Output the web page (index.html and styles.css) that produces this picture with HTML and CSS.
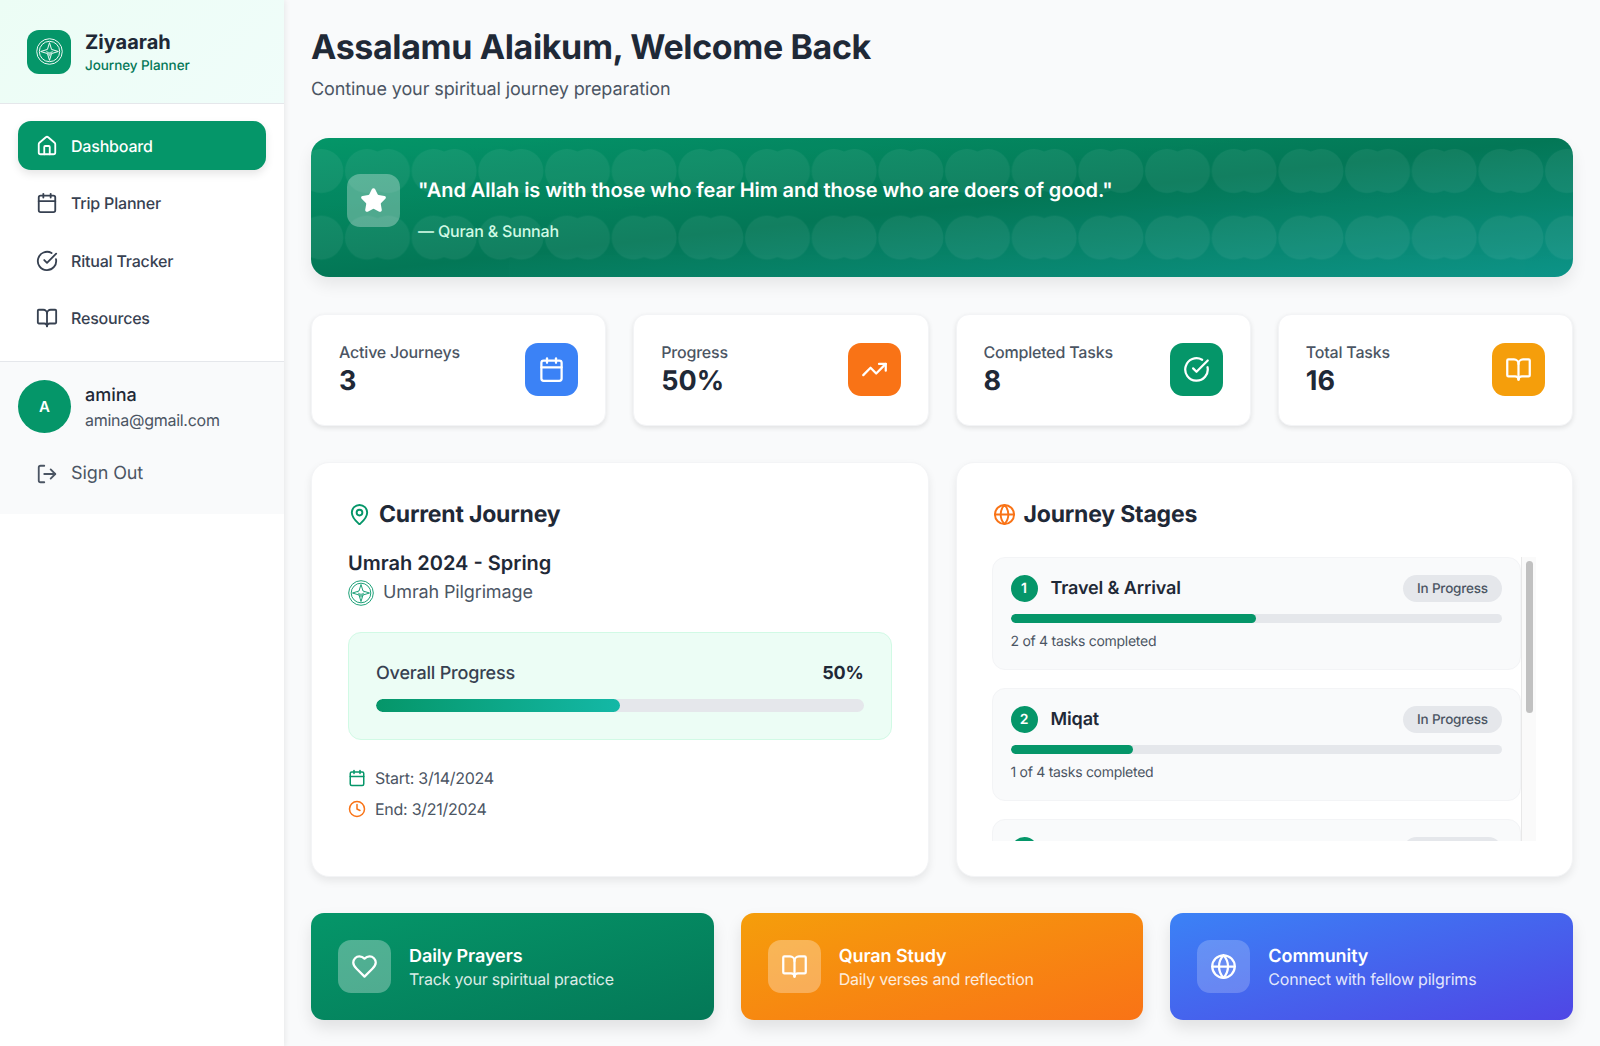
FILE: index.html
```html
<!DOCTYPE html>
<html lang="en">
<head>
  <meta charset="UTF-8">
  <title>Ziyaarah - Journey Planner</title>
  <link rel="stylesheet" href="styles.css">
</head>
<body>
  <svg class="defs" width="0" height="0">
    <defs>
      <symbol id="i-logo" viewBox="0 0 26 26">
        <circle cx="13" cy="13" r="12.3" fill="none" stroke="currentColor" stroke-width="0.9"/>
        <circle cx="13" cy="13" r="9.8" fill="none" stroke="currentColor" stroke-width="0.9"/>
        <path d="M13 4.5 15 11 21.5 13 15 15 13 21.5 11 15 4.5 13 11 11Z" fill="none" stroke="currentColor" stroke-width="0.9" stroke-linejoin="round"/>
        <path d="M9.2 12.2 13 13.8 16.8 12.2 14 16.4 13 18 12 16.4Z" fill="currentColor" opacity="0.6"/>
      </symbol>
      <symbol id="i-home" viewBox="0 0 24 24"><path d="M15 21v-8a1 1 0 0 0-1-1h-4a1 1 0 0 0-1 1v8"/><path d="M3 10a2 2 0 0 1 .709-1.528l7-5.999a2 2 0 0 1 2.582 0l7 5.999A2 2 0 0 1 21 10v9a2 2 0 0 1-2 2H5a2 2 0 0 1-2-2z"/></symbol>
      <symbol id="i-calendar" viewBox="0 0 24 24"><path d="M8 2v4"/><path d="M16 2v4"/><rect width="18" height="18" x="3" y="4" rx="2"/><path d="M3 10h18"/></symbol>
      <symbol id="i-check" viewBox="0 0 24 24"><path d="M21.801 10A10 10 0 1 1 17 3.335"/><path d="m9 11 3 3L22 4"/></symbol>
      <symbol id="i-book" viewBox="0 0 24 24"><path d="M12 7v14"/><path d="M3 18a1 1 0 0 1-1-1V4a1 1 0 0 1 1-1h5a4 4 0 0 1 4 4 4 4 0 0 1 4-4h5a1 1 0 0 1 1 1v13a1 1 0 0 1-1 1h-6a3 3 0 0 0-3 3 3 3 0 0 0-3-3z"/></symbol>
      <symbol id="i-logout" viewBox="0 0 24 24"><path d="m16 17 5-5-5-5"/><path d="M21 12H9"/><path d="M9 21H5a2 2 0 0 1-2-2V5a2 2 0 0 1 2-2h4"/></symbol>
      <symbol id="i-trend" viewBox="0 0 24 24"><path d="M16 7h6v6"/><path d="m22 7-8.5 8.5-5-5L2 17"/></symbol>
      <symbol id="i-pin" viewBox="0 0 24 24"><path d="M20 10c0 4.993-5.539 10.193-7.399 11.799a1 1 0 0 1-1.202 0C9.539 20.193 4 14.993 4 10a8 8 0 0 1 16 0"/><circle cx="12" cy="10" r="3"/></symbol>
      <symbol id="i-globe" viewBox="0 0 24 24"><circle cx="12" cy="12" r="10"/><path d="M12 2a14.5 14.5 0 0 0 0 20 14.5 14.5 0 0 0 0-20"/><path d="M2 12h20"/></symbol>
      <symbol id="i-clock" viewBox="0 0 24 24"><circle cx="12" cy="12" r="10"/><path d="M12 6v6l4 2"/></symbol>
      <symbol id="i-heart" viewBox="0 0 24 24"><path d="M19 14c1.49-1.46 3-3.21 3-5.5A5.5 5.5 0 0 0 16.5 3c-1.76 0-3 .5-4.5 2-1.5-1.5-2.74-2-4.5-2A5.5 5.5 0 0 0 2 8.5c0 2.3 1.5 4.05 3 5.5l7 7Z"/></symbol>
      <symbol id="i-star" viewBox="0 0 24 24"><path d="M11.525 2.295a.53.53 0 0 1 .95 0l2.31 4.679a2.123 2.123 0 0 0 1.595 1.16l5.166.756a.53.53 0 0 1 .294.904l-3.736 3.638a2.123 2.123 0 0 0-.611 1.878l.882 5.14a.53.53 0 0 1-.771.56l-4.618-2.428a2.122 2.122 0 0 0-1.973 0L6.396 21.01a.53.53 0 0 1-.77-.56l.881-5.139a2.122 2.122 0 0 0-.611-1.879L2.16 9.795a.53.53 0 0 1 .294-.906l5.165-.755a2.122 2.122 0 0 0 1.597-1.16z"/></symbol>
      <pattern id="bannerDots" x="0" y="0" width="66.67" height="66.67" patternUnits="userSpaceOnUse">
        <circle cx="-10.7" cy="33" r="22" fill="#fff"/>
        <circle cx="10.3" cy="33" r="22" fill="#fff"/>
        <circle cx="56" cy="33" r="22" fill="#fff"/>
        <circle cx="77" cy="33" r="22" fill="#fff"/>
      </pattern>
    </defs>
  </svg>

  <div class="app">
    <aside class="sidebar">
      <div class="brand">
        <div class="brand-logo"><svg class="logo-svg"><use href="#i-logo"/></svg></div>
        <div>
          <div class="brand-name">Ziyaarah</div>
          <div class="brand-sub">Journey Planner</div>
        </div>
      </div>

      <nav class="nav">
        <a class="nav-item active"><svg class="icon icon-nav"><use href="#i-home"/></svg>Dashboard</a>
        <a class="nav-item"><svg class="icon icon-nav"><use href="#i-calendar"/></svg>Trip Planner</a>
        <a class="nav-item"><svg class="icon icon-nav"><use href="#i-check"/></svg>Ritual Tracker</a>
        <a class="nav-item"><svg class="icon icon-nav"><use href="#i-book"/></svg>Resources</a>
      </nav>

      <div class="user-box">
        <div class="user">
          <div class="avatar">A</div>
          <div class="user-info">
            <div class="user-name">amina</div>
            <div class="user-mail">amina@gmail.com</div>
          </div>
        </div>
        <a class="sign-out"><svg class="icon icon-nav"><use href="#i-logout"/></svg>Sign Out</a>
      </div>
    </aside>

    <main class="main">
      <h1>Assalamu Alaikum, Welcome Back</h1>
      <p class="lead">Continue your spiritual journey preparation</p>

      <section class="banner">
        <svg class="banner-dots"><rect width="100%" height="100%" fill="url(#bannerDots)"/></svg>
        <div class="banner-star"><svg class="icon icon-lg icon-fill"><use href="#i-star"/></svg></div>
        <div class="banner-text">
          <div class="quote">"And Allah is with those who fear Him and those who are doers of good."</div>
          <div class="quote-src">— Quran &amp; Sunnah</div>
        </div>
      </section>

      <section class="stats">
        <div class="stat">
          <div class="stat-text"><div class="stat-label">Active Journeys</div><div class="stat-value">3</div></div>
          <div class="stat-icon blue"><svg class="icon icon-lg"><use href="#i-calendar"/></svg></div>
        </div>
        <div class="stat">
          <div class="stat-text"><div class="stat-label">Progress</div><div class="stat-value">50%</div></div>
          <div class="stat-icon orange"><svg class="icon icon-lg"><use href="#i-trend"/></svg></div>
        </div>
        <div class="stat">
          <div class="stat-text"><div class="stat-label">Completed Tasks</div><div class="stat-value">8</div></div>
          <div class="stat-icon green"><svg class="icon icon-lg"><use href="#i-check"/></svg></div>
        </div>
        <div class="stat">
          <div class="stat-text"><div class="stat-label">Total Tasks</div><div class="stat-value">16</div></div>
          <div class="stat-icon amber"><svg class="icon icon-lg"><use href="#i-book"/></svg></div>
        </div>
      </section>

      <section class="panels">
        <div class="panel">
          <h2 class="panel-title"><svg class="icon icon-title c-green"><use href="#i-pin"/></svg>Current Journey</h2>
          <div class="trip-name">Umrah 2024 - Spring</div>
          <div class="trip-type"><svg class="logo-small"><use href="#i-logo"/></svg>Umrah Pilgrimage</div>

          <div class="overall">
            <div class="overall-head"><span>Overall Progress</span><strong>50%</strong></div>
            <div class="overall-bar"><div class="overall-fill" style="width: 50%"></div></div>
          </div>

          <div class="date-row"><svg class="icon icon-date c-green"><use href="#i-calendar"/></svg>Start: 3/14/2024</div>
          <div class="date-row"><svg class="icon icon-date c-orange"><use href="#i-clock"/></svg>End: 3/21/2024</div>
        </div>

        <div class="panel">
          <h2 class="panel-title stages-title"><svg class="icon icon-title c-orange"><use href="#i-globe"/></svg>Journey Stages</h2>
          <div class="stages-wrap">
            <div class="stages">
              <div class="stage">
                <div class="stage-head">
                  <span class="stage-num">1</span><span class="stage-name">Travel &amp; Arrival</span><span class="pill">In Progress</span>
                </div>
                <div class="stage-bar"><div class="stage-fill" style="width: 50%"></div></div>
                <div class="stage-note">2 of 4 tasks completed</div>
              </div>
              <div class="stage">
                <div class="stage-head">
                  <span class="stage-num">2</span><span class="stage-name">Miqat</span><span class="pill">In Progress</span>
                </div>
                <div class="stage-bar"><div class="stage-fill" style="width: 25%"></div></div>
                <div class="stage-note">1 of 4 tasks completed</div>
              </div>
              <div class="stage">
                <div class="stage-head">
                  <span class="stage-num"></span><span class="stage-name"></span><span class="pill"></span>
                </div>
              </div>
            </div>
            <div class="scroll-track"><div class="scroll-thumb"></div></div>
          </div>
        </div>
      </section>

      <section class="actions">
        <div class="action a-green">
          <div class="action-icon"><svg class="icon icon-lg"><use href="#i-heart"/></svg></div>
          <div class="action-text"><div class="action-title">Daily Prayers</div><div class="action-sub">Track your spiritual practice</div></div>
        </div>
        <div class="action a-orange">
          <div class="action-icon"><svg class="icon icon-lg"><use href="#i-book"/></svg></div>
          <div class="action-text"><div class="action-title">Quran Study</div><div class="action-sub">Daily verses and reflection</div></div>
        </div>
        <div class="action a-blue">
          <div class="action-icon"><svg class="icon icon-lg"><use href="#i-globe"/></svg></div>
          <div class="action-text"><div class="action-title">Community</div><div class="action-sub">Connect with fellow pilgrims</div></div>
        </div>
      </section>
    </main>
  </div>
</body>
</html>
```

FILE: styles.css
```css
html, body {
  margin: 0;
  padding: 0;
  background-color: #f9fafb;
  font-family: Inter, "Liberation Sans", sans-serif;
  color: #1f2937;
  text-rendering: geometricPrecision;
}

.defs {
  position: absolute;
}

.app {
  display: flex;
  min-height: 100vh;
}

/* icons */
.icon {
  fill: none;
  stroke: currentColor;
  stroke-width: 2;
  stroke-linecap: round;
  stroke-linejoin: round;
  flex-shrink: 0;
}

.icon-fill {
  fill: currentColor;
}

.icon-nav {
  width: 22px;
  height: 22px;
}

.icon-lg {
  width: 27px;
  height: 27px;
}

.icon-title {
  width: 23px;
  height: 23px;
}

.icon-date {
  width: 18px;
  height: 18px;
}

.c-green {
  color: #059669;
}

.c-orange {
  color: #f97316;
}

/* sidebar */
.sidebar {
  width: 284px;
  flex-shrink: 0;
  background-color: #fff;
  box-shadow: 1px 0 6px rgba(0, 0, 0, 0.08);
}

.brand {
  height: 104px;
  box-sizing: border-box;
  padding: 0 27px;
  display: flex;
  align-items: center;
  gap: 14px;
  background: linear-gradient(135deg, #ecfdf5, #f0fdfa);
  border-bottom: 1px solid #e5e7eb;
}

.brand-logo {
  width: 44px;
  height: 44px;
  border-radius: 12px;
  background-color: #059669;
  color: #fff;
  display: flex;
  align-items: center;
  justify-content: center;
}

.logo-svg {
  width: 27px;
  height: 27px;
}

.brand-name {
  padding-top: 2px;
  font-size: 20px;
  font-weight: 650;
  line-height: 27px;
  color: #1f2937;
}

.brand-sub {
  margin-top: 1px;
  font-size: 13.5px;
  font-weight: 500;
  line-height: 19px;
  letter-spacing: -0.07px;
  color: #047857;
}

.nav {
  padding: 17px 18px 18px;
  display: flex;
  flex-direction: column;
  gap: 8.6px;
}

.nav-item {
  height: 49px;
  box-sizing: border-box;
  padding: 0 18px;
  display: flex;
  align-items: center;
  gap: 13px;
  border-radius: 13px;
  font-size: 16px;
  font-weight: 500;
  letter-spacing: -0.2px;
  color: #374151;
}

.nav-item.active {
  background-color: #059669;
  color: #fff;
  box-shadow: 0 4px 8px rgba(0, 0, 0, 0.1);
}

.user-box {
  padding: 18px 18px 0;
  height: 153px;
  box-sizing: border-box;
  background-color: #f9fafb;
  border-top: 1px solid #e5e7eb;
}

.user {
  display: flex;
  align-items: center;
  gap: 14px;
}

.user-info {
  padding-top: 3px;
}

.avatar {
  width: 53px;
  height: 53px;
  border-radius: 50%;
  background-color: #059669;
  color: #fff;
  font-size: 15px;
  font-weight: 600;
  display: flex;
  align-items: center;
  justify-content: center;
}

.user-name {
  font-size: 18px;
  font-weight: 500;
  line-height: 25px;
  color: #1f2937;
}

.user-mail {
  font-size: 16px;
  line-height: 24px;
  letter-spacing: -0.27px;
  color: #4b5563;
}

.sign-out {
  margin-top: 17px;
  height: 48px;
  padding-left: 18px;
  display: flex;
  align-items: center;
  gap: 13px;
  font-size: 18px;
  letter-spacing: -0.1px;
  color: #4b5563;
}

/* main */
.main {
  flex: 1;
  min-width: 0;
  padding: 24px 27px 27px;
}

h1 {
  margin: 0;
  font-size: 34px;
  font-weight: 700;
  line-height: 48px;
  letter-spacing: -0.37px;
  color: #1f2937;
}

.lead {
  margin: 4px 0 0;
  font-size: 18px;
  line-height: 27px;
  letter-spacing: -0.1px;
  color: #4b5563;
}

.banner {
  position: relative;
  margin-top: 35px;
  height: 139px;
  box-sizing: border-box;
  padding: 36px;
  display: flex;
  align-items: flex-start;
  gap: 18px;
  overflow: hidden;
  border-radius: 18px;
  background: linear-gradient(to bottom right, #059669, #047857, #0d9488);
  box-shadow: 0 8px 16px rgba(0, 0, 0, 0.08);
  color: #fff;
}

.banner-dots {
  position: absolute;
  left: 0;
  top: 0;
  width: 100%;
  height: 100%;
  opacity: 0.06;
}

.banner-star {
  position: relative;
  width: 53px;
  height: 53px;
  flex-shrink: 0;
  border-radius: 13px;
  background-color: rgba(255, 255, 255, 0.3);
  display: flex;
  align-items: center;
  justify-content: center;
}

.banner-text {
  position: relative;
  padding-top: 2px;
}

.quote {
  font-size: 20px;
  font-weight: 600;
  line-height: 28px;
  letter-spacing: -0.07px;
}

.quote-src {
  margin-top: 15px;
  font-size: 16px;
  font-weight: 500;
  line-height: 24px;
  letter-spacing: -0.19px;
  color: #d1fae5;
}

.stats {
  margin-top: 37px;
  display: grid;
  grid-template-columns: repeat(4, 1fr);
  gap: 27px;
}

.stat {
  height: 112px;
  box-sizing: border-box;
  padding: 0 27px 1px 27px;
  display: flex;
  align-items: center;
  justify-content: space-between;
  background-color: #fff;
  border: 1px solid #f3f4f6;
  border-radius: 13px;
  box-shadow: 0 2px 5px rgba(0, 0, 0, 0.1);
}

.stat-text {
  margin-top: -2px;
}

.stat-label {
  font-size: 16px;
  font-weight: 500;
  line-height: 24px;
  letter-spacing: -0.2px;
  color: #4b5563;
}

.stat-value {
  font-size: 27px;
  font-weight: 700;
  line-height: 34px;
  color: #1f2937;
}

.stat-icon {
  width: 53px;
  height: 53px;
  border-radius: 13px;
  color: #fff;
  display: flex;
  align-items: center;
  justify-content: center;
}

.blue {
  background-color: #3b82f6;
}

.orange {
  background-color: #f97316;
}

.green {
  background-color: #059669;
}

.amber {
  background-color: #f59e0b;
}

.panels {
  margin-top: 36px;
  display: grid;
  grid-template-columns: 1fr 1fr;
  gap: 27px;
}

.panel {
  height: 415px;
  box-sizing: border-box;
  padding: 37px 36px 36px;
  background-color: #fff;
  border: 1px solid #f3f4f6;
  border-radius: 18px;
  box-shadow: 0 4px 8px rgba(0, 0, 0, 0.08);
}

.panel-title {
  margin: 0;
  display: flex;
  align-items: center;
  gap: 8px;
  font-size: 23px;
  font-weight: 650;
  line-height: 28px;
  letter-spacing: -0.2px;
  color: #1f2937;
}

.trip-name {
  margin-top: 21px;
  font-size: 20px;
  font-weight: 600;
  line-height: 28px;
  color: #1f2937;
}

.trip-type {
  margin-top: 3px;
  display: flex;
  align-items: center;
  gap: 9px;
  font-size: 18px;
  line-height: 26px;
  letter-spacing: -0.13px;
  color: #4b5563;
}

.logo-small {
  width: 26px;
  height: 26px;
  color: #059669;
}

.overall {
  margin-top: 26px;
  margin-bottom: 22px;
  height: 108px;
  box-sizing: border-box;
  padding: 28px 27px 0;
  background-color: #ecfdf5;
  border: 1px solid #d1fae5;
  border-radius: 13px;
}

.overall-head {
  display: flex;
  justify-content: space-between;
  font-size: 18px;
  font-weight: 500;
  line-height: 26px;
  letter-spacing: -0.2px;
  color: #374151;
}

.overall-head strong {
  font-weight: 650;
  color: #1f2937;
}

.overall-bar {
  margin-top: 12px;
  height: 13px;
  border-radius: 7px;
  background-color: #e5e7eb;
  overflow: hidden;
}

.overall-fill {
  height: 100%;
  border-radius: 7px;
  background: linear-gradient(90deg, #059669, #14b8a6);
}

.date-row {
  display: flex;
  align-items: center;
  gap: 9px;
  height: 31px;
  font-size: 16px;
  letter-spacing: -0.27px;
  color: #4b5563;
}

.stages-title {
  margin-bottom: 29px;
}

.stages-wrap {
  height: 284px;
  margin-left: -1px;
  display: flex;
  overflow: hidden;
}

.stages {
  flex: 1;
  min-width: 0;
  display: flex;
  flex-direction: column;
  gap: 18px;
}

.scroll-track {
  width: 15px;
  flex-shrink: 0;
  box-sizing: border-box;
  padding: 4px 3px 0 4px;
  background-color: #fafafa;
  border-left: 1px solid #e8e8e8;
}

.scroll-thumb {
  height: 152px;
  border-radius: 4px;
  background-color: #c1c1c1;
}

.stage {
  flex-shrink: 0;
  height: 113px;
  box-sizing: border-box;
  padding: 17px 18px 0;
  background-color: #f9fafb;
  border: 1px solid #f3f4f6;
  border-radius: 13px;
}

.stage-head {
  display: flex;
  align-items: center;
}

.stage-num {
  width: 27px;
  height: 27px;
  border-radius: 50%;
  background-color: #059669;
  color: #fff;
  font-size: 14px;
  font-weight: 600;
  display: flex;
  align-items: center;
  justify-content: center;
}

.stage-name {
  margin-left: 13px;
  flex: 1;
  font-size: 18px;
  font-weight: 600;
  letter-spacing: -0.13px;
  color: #1f2937;
}

.pill {
  width: 99px;
  height: 27px;
  border-radius: 14px;
  background-color: #e5e7eb;
  color: #4b5563;
  font-size: 13.5px;
  font-weight: 500;
  letter-spacing: -0.2px;
  display: flex;
  align-items: center;
  justify-content: center;
}

.stage-bar {
  margin-top: 12px;
  height: 9px;
  border-radius: 5px;
  background-color: #e5e7eb;
  overflow: hidden;
}

.stage-fill {
  height: 100%;
  border-radius: 5px;
  background-color: #059669;
}

.stage-note {
  margin-top: 9px;
  font-size: 14px;
  line-height: 20px;
  letter-spacing: -0.28px;
  color: #4b5563;
}

.actions {
  margin-top: 36px;
  display: grid;
  grid-template-columns: repeat(3, 1fr);
  gap: 27px;
}

.action {
  height: 107px;
  box-sizing: border-box;
  padding: 0 27px;
  display: flex;
  align-items: center;
  gap: 18px;
  border-radius: 13px;
  color: #fff;
  box-shadow: 0 8px 16px rgba(0, 0, 0, 0.1);
}

.a-green {
  background: linear-gradient(to bottom right, #059669, #047857);
}

.a-orange {
  background: linear-gradient(to bottom right, #f59e0b, #f97316);
}

.a-blue {
  background: linear-gradient(to bottom right, #3b82f6, #4f46e5);
}

.action-icon {
  width: 53px;
  height: 53px;
  flex-shrink: 0;
  border-radius: 13px;
  background-color: rgba(255, 255, 255, 0.3);
  display: flex;
  align-items: center;
  justify-content: center;
}

.a-blue .action-icon {
  background-color: rgba(255, 255, 255, 0.2);
}

.action-text {
  padding-top: 3px;
}

.action-title {
  font-size: 18px;
  font-weight: 600;
  line-height: 23px;
  letter-spacing: -0.08px;
}

.action-sub {
  font-size: 16px;
  line-height: 23px;
  letter-spacing: -0.21px;
  opacity: 0.85;
}
```
